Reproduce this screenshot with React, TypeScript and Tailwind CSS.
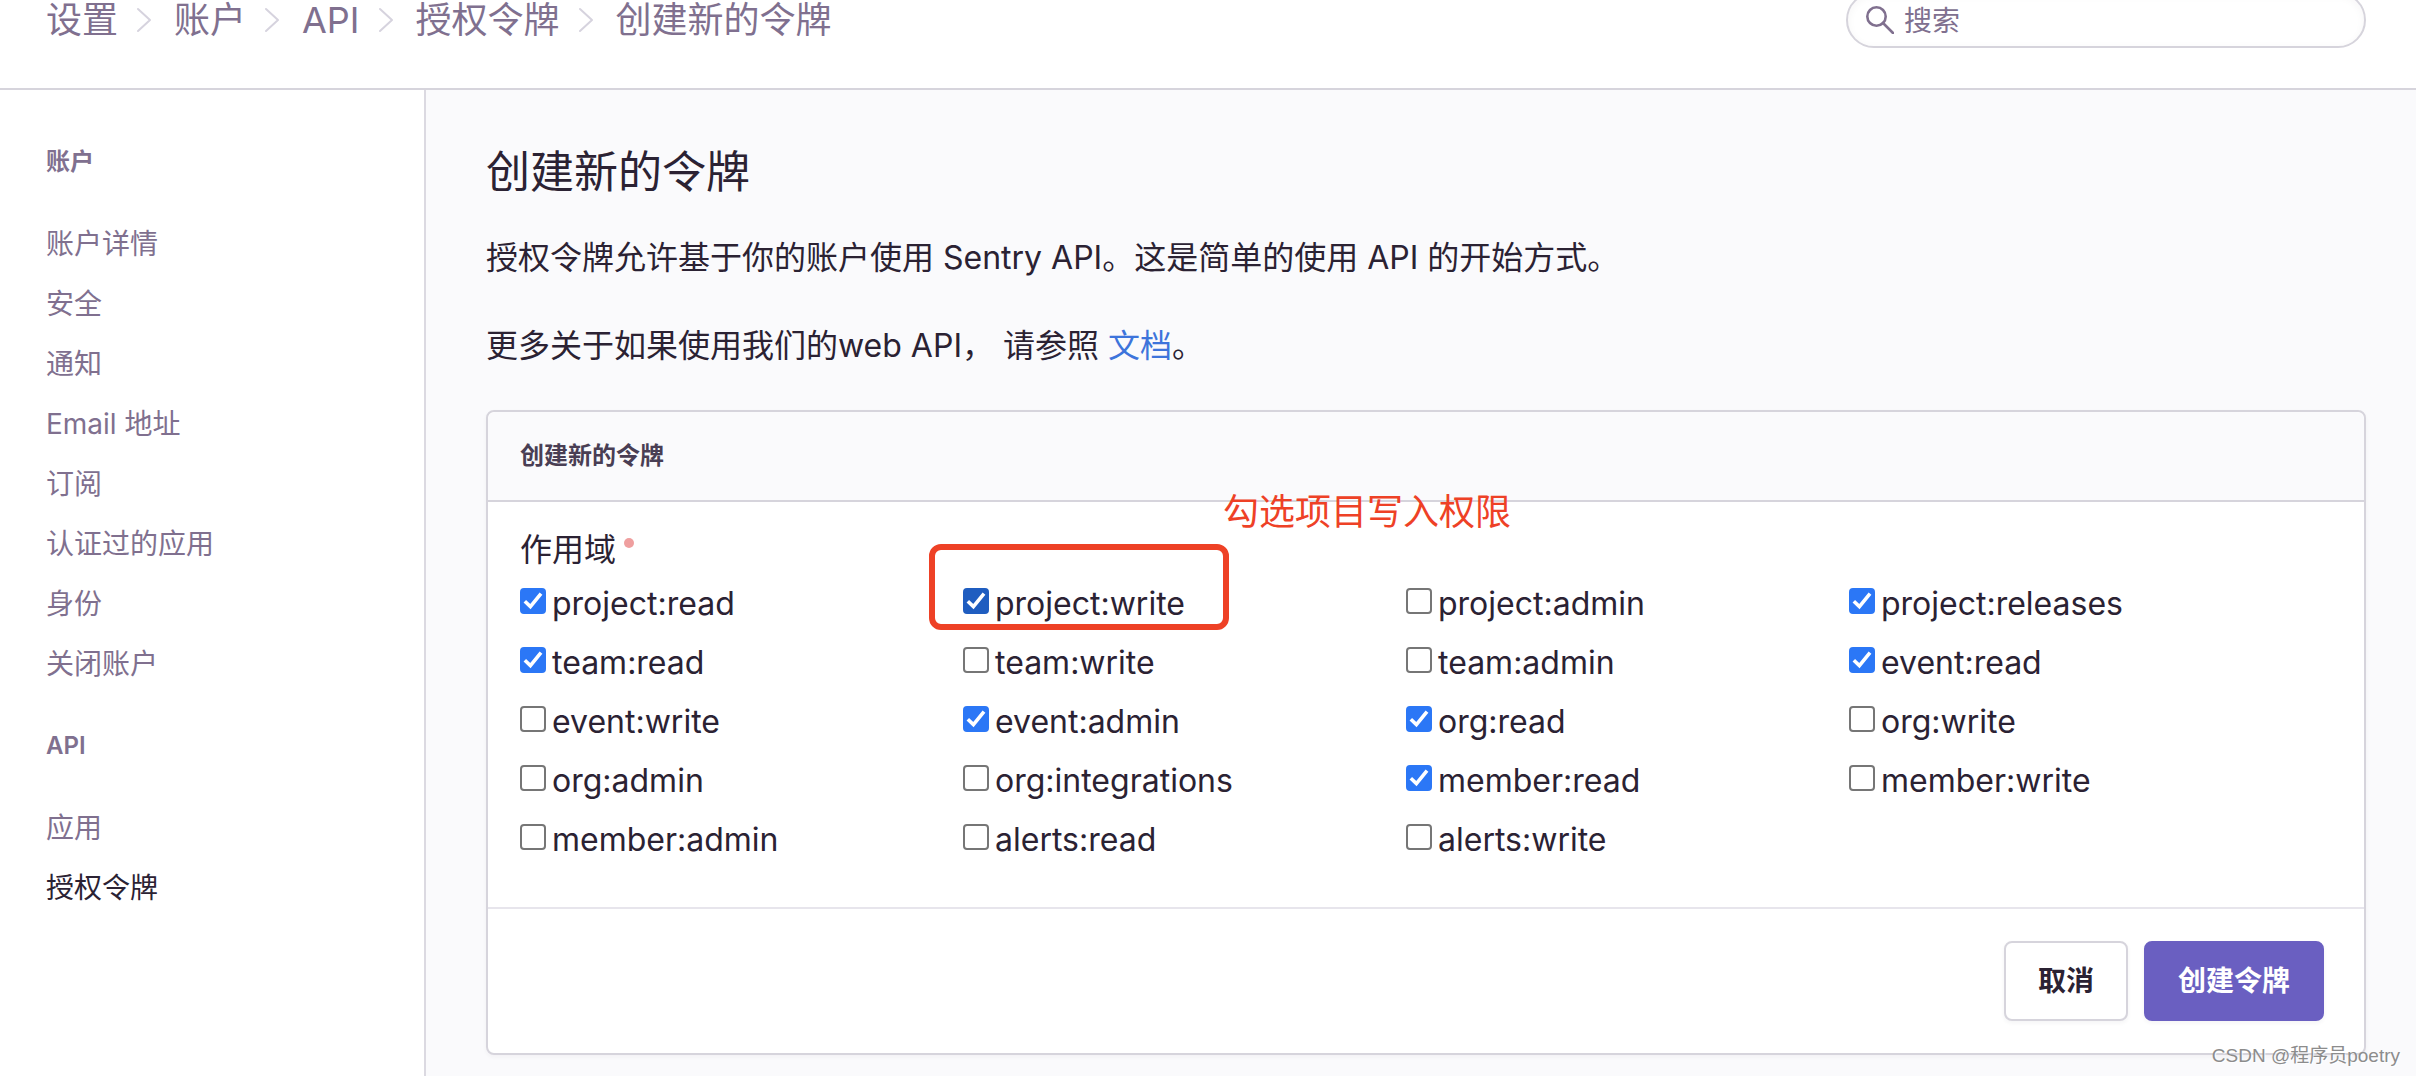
import { Fragment } from 'react';

const CRUMBS = ['设置', '账户', 'API', '授权令牌', '创建新的令牌'];

interface NavSection {
  title: string;
  items: string[];
}

const NAV: NavSection[] = [
  {
    title: '账户',
    items: ['账户详情', '安全', '通知', 'Email 地址', '订阅', '认证过的应用', '身份', '关闭账户'],
  },
  { title: 'API', items: ['应用', '授权令牌'] },
];

const ACTIVE_ITEM = '授权令牌';

interface Scope {
  name: string;
  checked?: boolean;
  highlighted?: boolean;
}

const SCOPES: Scope[] = [
  { name: 'project:read', checked: true },
  { name: 'project:write', checked: true, highlighted: true },
  { name: 'project:admin' },
  { name: 'project:releases', checked: true },
  { name: 'team:read', checked: true },
  { name: 'team:write' },
  { name: 'team:admin' },
  { name: 'event:read', checked: true },
  { name: 'event:write' },
  { name: 'event:admin', checked: true },
  { name: 'org:read', checked: true },
  { name: 'org:write' },
  { name: 'org:admin' },
  { name: 'org:integrations' },
  { name: 'member:read', checked: true },
  { name: 'member:write' },
  { name: 'member:admin' },
  { name: 'alerts:read' },
  { name: 'alerts:write' },
];

function Chevron() {
  return (
    <svg viewBox="0 0 28 28" className="ml-3 mr-4 size-7 shrink-0" fill="none" aria-hidden="true">
      <path d="M8 3l12 11L8 25" stroke="#d6d3de" strokeWidth="2" strokeLinecap="round" strokeLinejoin="round" />
    </svg>
  );
}

function Header() {
  return (
    <header className="-mt-12 flex h-[138px] items-center justify-between border-b-2 border-[#d6d4dc] bg-white pl-[46px] pr-[50px]">
      <nav aria-label="breadcrumb" className="flex items-center text-4xl text-[#80708f]">
        {CRUMBS.map((crumb, i) => (
          <Fragment key={crumb}>
            {i > 0 && <Chevron />}
            <a href="#">{crumb}</a>
          </Fragment>
        ))}
      </nav>
      <label className="flex h-14 w-[520px] items-center gap-[10px] rounded-full border-2 border-[#d6d4dc] bg-white px-[18px] shadow-[inset_0_2px_8px_rgba(43,34,51,0.04)]">
        <svg viewBox="0 0 28 28" className="size-7 shrink-0" fill="none" stroke="#80708f" strokeWidth="2.6" aria-hidden="true">
          <circle cx="10.5" cy="10.5" r="9.2" />
          <path d="M17 17l10 10" strokeLinecap="round" />
        </svg>
        <input
          type="text"
          aria-label="搜索"
          placeholder="搜索"
          className="min-w-0 flex-1 bg-transparent pt-[2px] text-[28px] outline-none placeholder:text-[#80708f]"
        />
      </label>
    </header>
  );
}

function Sidebar() {
  return (
    <aside className="w-[426px] shrink-0 border-r-2 border-[#dbd9e1] bg-white pl-[46px] pt-[52px]">
      {NAV.map((section) => (
        <section key={section.title} className="mb-8">
          <h6 className="mb-8 text-2xl leading-10 font-semibold text-[#80708f]">{section.title}</h6>
          <ul>
            {section.items.map((item) => (
              <li key={item} className="text-[28px] leading-[60px]">
                <a href="#" className={item === ACTIVE_ITEM ? 'text-[#2b2233]' : 'text-[#80708f]'}>
                  {item}
                </a>
              </li>
            ))}
          </ul>
        </section>
      ))}
    </aside>
  );
}

function ScopeOption({ scope }: { scope: Scope }) {
  return (
    <div className="relative h-[59px]">
      <label className="flex items-start gap-[6px]">
        <span className="grid shrink-0">
          <input
            type="checkbox"
            defaultChecked={scope.checked}
            className={`peer col-start-1 row-start-1 size-[26px] appearance-none rounded border-2 border-[#767676] bg-white ${
              scope.highlighted
                ? 'checked:border-[#1f5dc0] checked:bg-[#1f5dc0]'
                : 'checked:border-[#2b77f6] checked:bg-[#2b77f6]'
            }`}
          />
          <svg
            viewBox="0 0 26 26"
            className="pointer-events-none invisible col-start-1 row-start-1 size-[26px] peer-checked:visible"
            fill="none"
            aria-hidden="true"
          >
            <path d="M4.8 13.2l5.6 5.4L21 5.6" stroke="white" strokeWidth="3.6" />
          </svg>
        </span>
        <span className="text-[32px] leading-8">{scope.name}</span>
      </label>
      {scope.highlighted && (
        <>
          <div className="pointer-events-none absolute -left-[34px] -top-[44px] h-[86px] w-[300px] rounded-xl border-[6px] border-[#ee4126]" />
          <p className="absolute left-[260px] -top-[100px] whitespace-nowrap text-4xl leading-12 text-[#ee4126]">
            勾选项目写入权限
          </p>
        </>
      )}
    </div>
  );
}

function TokenPanel() {
  return (
    <form className="rounded-lg border-2 border-[#d6d4dc] bg-white shadow-[0_2px_4px_rgba(43,34,51,0.04)]">
      <div className="rounded-t-lg border-b-2 border-[#d6d4dc] bg-[#fafafc] px-8 py-6">
        <h2 className="text-2xl leading-10 font-semibold text-[#493e54]">创建新的令牌</h2>
      </div>
      <div className="py-6 pl-8 pr-[72px]">
        <fieldset>
          <legend className="mb-[14px] flex gap-2 text-[32px] leading-12">
            作用域
            <span className="mt-3 size-[10px] rounded-full bg-[#ef9f9f]" />
          </legend>
          <div className="grid grid-cols-4">
            {SCOPES.map((scope) => (
              <ScopeOption key={scope.name} scope={scope} />
            ))}
          </div>
        </fieldset>
      </div>
      <div className="flex justify-end gap-4 border-t-2 border-[#e7e5ec] py-8 pl-8 pr-10">
        <button
          type="button"
          className="h-20 rounded-lg border-2 border-[#d6d4dc] bg-white px-8 text-[28px] font-semibold shadow-[0_2px_4px_rgba(43,34,51,0.05)]"
        >
          取消
        </button>
        <button
          type="submit"
          className="h-20 rounded-lg border-2 border-[#6a5fc1] bg-[#6a5fc1] px-8 text-[28px] font-semibold text-white shadow-[0_2px_4px_rgba(43,34,51,0.05)]"
        >
          创建令牌
        </button>
      </div>
    </form>
  );
}

export default function App() {
  return (
    <div className="relative flex min-h-screen flex-col overflow-hidden bg-[#fafafc] font-[Inter,'Noto_Sans_CJK_SC',sans-serif] text-[#2b2233]">
      <Header />
      <div className="flex flex-1">
        <Sidebar />
        <main className="min-w-0 flex-1 pb-4 pl-[60px] pr-[50px] pt-[50px]">
          <h1 className="mb-[30px] text-[44px] leading-16">创建新的令牌</h1>
          <p className="mb-10 text-[32px] leading-12">
            授权令牌允许基于你的账户使用 Sentry API。这是简单的使用 API 的开始方式。
          </p>
          <p className="mb-10 text-[32px] leading-12">
            更多关于如果使用我们的web API， 请参照{' '}
            <a href="#" className="text-[#3d74db]">
              文档
            </a>
            。
          </p>
          <TokenPanel />
        </main>
      </div>
      <div className="absolute bottom-2 right-4 text-[19px] leading-6 text-[#8c8c8c] font-['Liberation_Sans','Noto_Sans_CJK_SC',sans-serif] [text-shadow:1px_1px_1px_#fff]">
        CSDN @程序员poetry
      </div>
    </div>
  );
}
